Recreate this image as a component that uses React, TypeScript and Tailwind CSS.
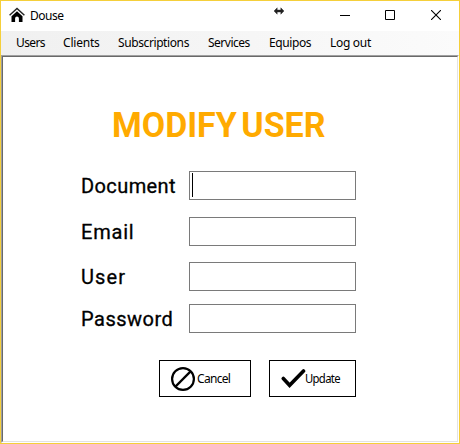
import React from "react";

const menu = [
  { label: "Users", cls: "w-[47px] tracking-[-0.6px]" },
  { label: "Clients", cls: "w-[55px] tracking-[-0.2px]" },
  { label: "Subscriptions", cls: "w-[90px] tracking-[-0.4px]" },
  { label: "Services", cls: "w-[61px] tracking-[-0.5px]" },
  { label: "Equipos", cls: "w-[61px] tracking-[-0.4px]" },
  { label: "Log out", cls: "w-[60px] tracking-[-0.3px]" },
];

const fields = [
  { label: "Document", row: "mb-[17px]", text: "tracking-[0.4px]" },
  { label: "Email", row: "mb-[16px]", text: "tracking-[0.8px]" },
  { label: "User", row: "mb-[13px]", text: "tracking-[1.1px]" },
  { label: "Password", row: "", text: "tracking-[0.5px]" },
];

function TitleBar() {
  return (
    <header className="flex h-[30px] shrink-0 items-start bg-white">
      <svg className="ml-2 mt-[6px] h-4 w-4" viewBox="0 0 16 16">
        <path d="M.6 8.300 8 1.400l7.400 6.900" fill="none" stroke="#222" strokeWidth="1.400" />
        <path d="M2.500 9.200 8 4.200l5.500 5V15h-3.600v-3.500a1.900 1.900 0 0 0-3.800 0V15H2.500Z" fill="#000" />
      </svg>
      <span className="ml-[5px] mt-[6px] text-[12px] leading-[17px] tracking-[-0.5px]">Douse</span>
      <svg className="ml-auto mr-[56px] mt-[6px] h-[8px] w-[10px]" viewBox="0 0 10 8">
        <path d="M0 4 3.200 .8V3h3.600V.8L10 4 6.800 7.200V5H3.200v2.200Z" fill="#222" stroke="#222" strokeWidth=".4" />
      </svg>
      <svg className="mr-[35px] mt-[9px] h-[10px] w-[10px]" viewBox="0 0 10 10">
        <path d="M0 5.500h10" stroke="#000" />
      </svg>
      <svg className="mr-[36px] mt-[9px] h-[10px] w-[10px]" viewBox="0 0 10 10">
        <path d="M.5.5h9v9h-9Z" fill="none" stroke="#000" />
      </svg>
      <svg className="mr-[18px] mt-[9px] h-[10px] w-[10px]" viewBox="0 0 10 10">
        <path d="m0 0 10 10M10 0 0 10" stroke="#000" strokeWidth="1.1" />
      </svg>
    </header>
  );
}

export default function App() {
  return (
    <div className="flex h-[444px] w-[460px] flex-col overflow-hidden border border-[#f5cf3a] bg-white font-['Noto_Sans','Open_Sans',sans-serif] text-black">
      <TitleBar />
      <nav className="flex h-6 shrink-0 items-start bg-linear-to-r from-[#f0f0f0] to-[#fbfbfb] pl-[15px] text-[12px] leading-[23px]">
        {menu.map((m) => (
          <span key={m.label} className={`whitespace-nowrap ${m.cls}`}>{m.label}</span>
        ))}
      </nav>
      <div className="flex-1 border border-b-white border-l-[#a0a0a0] border-r-white border-t-[#a0a0a0]">
        <main className="h-full border border-b-[#e3e3e3] border-l-[#696969] border-r-[#e3e3e3] border-t-[#696969] pl-[78px] pt-[44px]">
          <h1 className="ml-[31px] h-[49px] w-[220px] origin-left scale-x-[0.97] whitespace-nowrap font-['Roboto',sans-serif] text-[35px] font-bold leading-[49px] text-[#ffaa00] [word-spacing:-4px]">
            MODIFY USER
          </h1>
          <form className="mt-[21px]">
            {fields.map((f, i) => (
              <div key={f.label} className={`flex h-[29px] items-start ${f.row}`}>
                <label className={`mt-px w-[108px] font-['Roboto',sans-serif] text-[20px] leading-[28px] [-webkit-text-stroke:0.3px_black] ${f.text}`}>{f.label}</label>
                <div className="h-[29px] w-[167px] border border-[#7a7a7a] bg-white pl-[2px] pt-px">
                  {i === 0 && <div className="h-[24px] w-px bg-black" />}
                </div>
              </div>
            ))}
          </form>
          <div className="ml-[78px] mt-[27px] flex gap-[18px] text-[12px] leading-[17px]">
            <button className="flex h-[37px] w-[92px] items-center border border-black pl-[10px]">
              <svg className="h-[26px] w-[26px]" viewBox="0 0 26 26" fill="none" stroke="#000">
                <circle cx="13" cy="13" r="10.900" strokeWidth="2.200" />
                <path d="M5.400 20.600 20.600 5.400" strokeWidth="2.200" />
              </svg>
              <span className="ml-px tracking-[-0.7px]">Cancel</span>
            </button>
            <button className="flex h-[37px] w-[87px] items-center border border-black pl-[10px]">
              <svg className="h-[26px] w-[26px]" viewBox="0 0 26 26" fill="none" stroke="#000">
                <path d="m3.300 12.500 6.300 6.800L23.500 5" strokeWidth="3.600" strokeLinecap="round" />
              </svg>
              <span className="-ml-px origin-left scale-x-[0.94] tracking-[-0.7px]">Update</span>
            </button>
          </div>
        </main>
      </div>
    </div>
  );
}
